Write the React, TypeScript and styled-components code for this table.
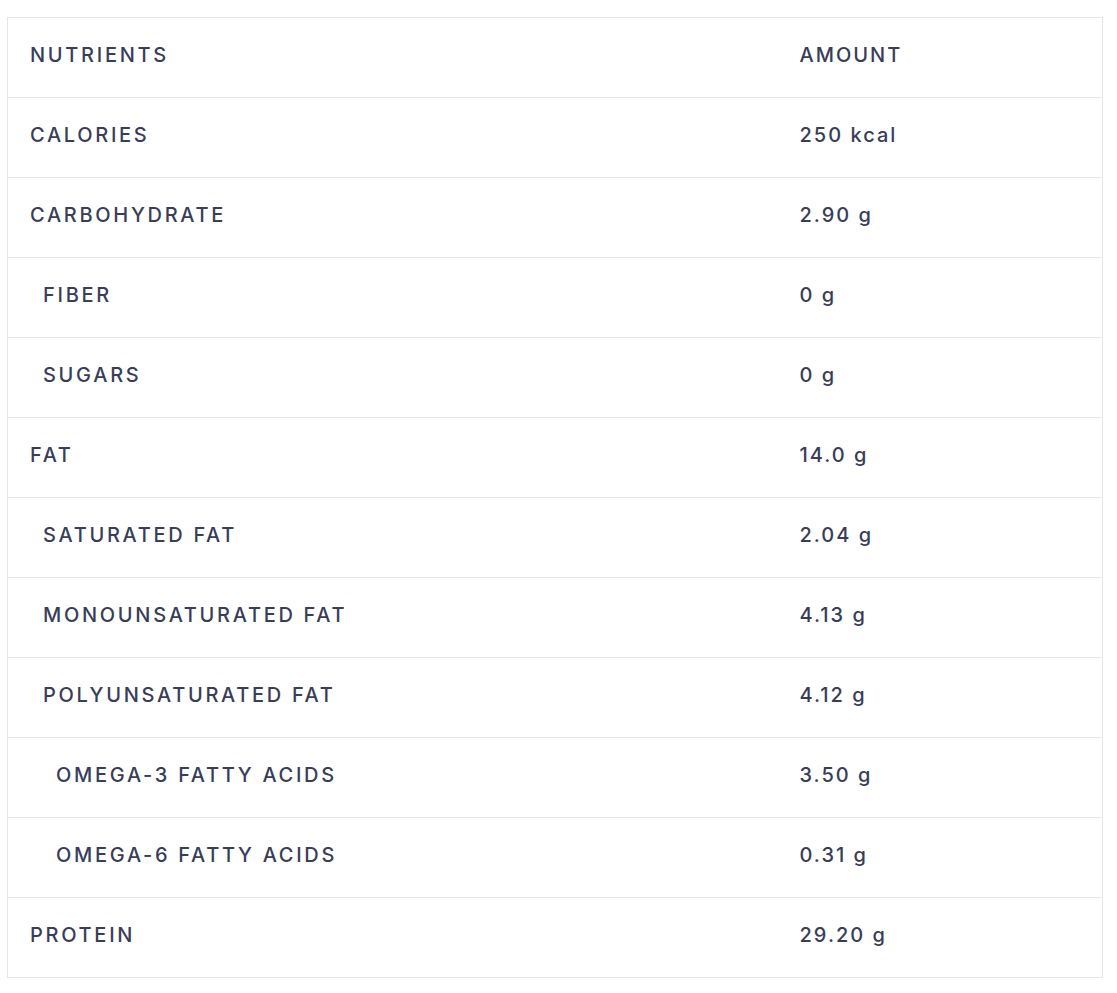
import React from "react";
import styled, { createGlobalStyle } from "styled-components";

const Global = createGlobalStyle`
  html, body { margin: 0; padding: 0; background: #ffffff; }
  body { font-family: "Inter", "Lato", sans-serif; }
`;

const Page = styled.div`
  padding: 17px 14px 0 7px;
`;

const Table = styled.table`
  width: 1096px;
  border-collapse: collapse;
  border: 1px solid #e6e6e6;
  color: #383d5a;
  font-size: 20px;
  font-weight: 450;
`;

const Row = styled.tr`
  height: 80px;
  border-bottom: 1px solid #e6e6e6;
`;

const NameCell = styled.td<{ $level: number }>`
  width: 769px;
  box-sizing: border-box;
  padding: 0 0 6px ${(p) => 22 + p.$level * 13}px;
  vertical-align: middle;
  text-transform: uppercase;
  letter-spacing: 2.7px;
`;

const AmountCell = styled.td`
  padding: 0 0 6px 23px;
  vertical-align: middle;
  letter-spacing: 2px;
`;

const rows: { name: string; amount: string; level: number }[] = [
  { name: "Nutrients", amount: "AMOUNT", level: 0 },
  { name: "Calories", amount: "250 kcal", level: 0 },
  { name: "Carbohydrate", amount: "2.90 g", level: 0 },
  { name: "Fiber", amount: "0 g", level: 1 },
  { name: "Sugars", amount: "0 g", level: 1 },
  { name: "Fat", amount: "14.0 g", level: 0 },
  { name: "Saturated fat", amount: "2.04 g", level: 1 },
  { name: "Monounsaturated fat", amount: "4.13 g", level: 1 },
  { name: "Polyunsaturated fat", amount: "4.12 g", level: 1 },
  { name: "Omega-3 fatty acids", amount: "3.50 g", level: 2 },
  { name: "Omega-6 fatty acids", amount: "0.31 g", level: 2 },
  { name: "Protein", amount: "29.20 g", level: 0 },
];

export default function App() {
  return (
    <>
      <Global />
      <Page>
        <Table>
          <tbody>
            {rows.map((r) => (
              <Row key={r.name}>
                <NameCell $level={r.level}>{r.name}</NameCell>
                <AmountCell>{r.amount}</AmountCell>
              </Row>
            ))}
          </tbody>
        </Table>
      </Page>
    </>
  );
}
